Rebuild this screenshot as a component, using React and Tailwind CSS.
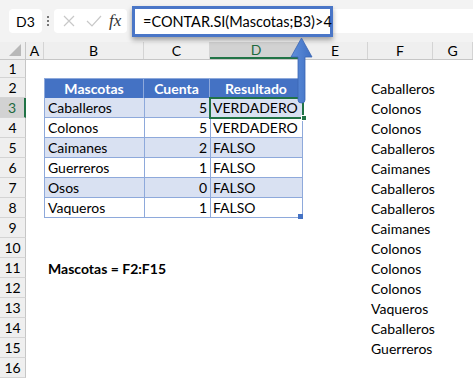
import React from 'react';

const cols = [
  { key: 'A', w: 18 },
  { key: 'B', w: 100 },
  { key: 'C', w: 66 },
  { key: 'D', w: 93 },
  { key: 'E', w: 65 },
  { key: 'F', w: 65 },
  { key: 'G', w: 40 },
];

const pets = [
  ['Caballeros', 5, 'VERDADERO'],
  ['Colonos', 5, 'VERDADERO'],
  ['Caimanes', 2, 'FALSO'],
  ['Guerreros', 1, 'FALSO'],
  ['Osos', 0, 'FALSO'],
  ['Vaqueros', 1, 'FALSO'],
];

const listF = [
  'Caballeros', 'Colonos', 'Colonos', 'Caballeros', 'Caimanes', 'Caballeros', 'Caballeros',
  'Caimanes', 'Colonos', 'Colonos', 'Colonos', 'Vaqueros', 'Caballeros', 'Guerreros',
];

const font = { fontFamily: 'Lato, "Open Sans", sans-serif' };

const RowHead = ({ n, active }) => (
  <div
    className={`w-[26px] shrink-0 flex items-center justify-center text-[14px] border-b border-[#d4d4d4] ${
      active ? 'bg-[#d2d2d2] text-[#1e6b3f] border-r-2 border-r-[#217346]' : 'bg-[#efefef] text-black border-r border-r-[#c6c6c6]'
    }`}
  >
    {n}
  </div>
);

const TableRow = ({ row, i }) => {
  const band = i % 2 === 0 ? 'bg-[#d9e1f2]' : 'bg-white';
  return (
    <div className="flex h-full">
      <div className={`w-[100px] ${band} border-l border-b border-[#8ea9db] pl-[3px] flex items-center`}>{row[0]}</div>
      <div className={`w-[66px] ${band} border-l border-b border-[#8ea9db] pr-[3px] flex items-center justify-end`}>{row[1]}</div>
      <div className={`w-[93px] ${band} border-l border-r border-b border-[#8ea9db] pl-[2px] flex items-center`}>{row[2]}</div>
    </div>
  );
};

export default function App() {
  const rows = [];
  for (let r = 1; r <= 16; r++) {
    const h = r === 1 ? 'h-[18px]' : 'h-[20px]';
    let content = null;
    if (r === 2) {
      content = (
        <div className="flex h-full bg-[#4472c4] text-white font-bold border border-b-0 border-[#8ea9db]">
          <div className="w-[99px] flex items-center justify-center border-r border-[#8ea9db]">Mascotas</div>
          <div className="w-[66px] flex items-center justify-center border-r border-[#8ea9db]">Cuenta</div>
          <div className="w-[92px] flex items-center justify-center">Resultado</div>
        </div>
      );
    } else if (r >= 3 && r <= 8) {
      content = <TableRow row={pets[r - 3]} i={r - 3} />;
    } else if (r === 11) {
      content = <div className="h-full flex items-center pl-[4px] font-bold">Mascotas = F2:F15</div>;
    }
    rows.push(
      <div key={r} className={`flex ${h}`}>
        <RowHead n={r} active={r === 3} />
        <div className="w-[18px] shrink-0" />
        <div className="w-[259px] shrink-0">{content}</div>
        <div className="w-[65px] shrink-0" />
        <div className="w-[65px] shrink-0 flex items-center pl-[3px]">
          {r >= 2 && r <= 15 ? listF[r - 2] : ''}
        </div>
      </div>
    );
  }

  return (
    <div className="relative w-[473px] h-[378px] overflow-hidden bg-white text-[14px] text-black" style={font}>
      {/* formula bar */}
      <div className="h-[42px] bg-[#f3f3f3] flex items-center">
        <div className="ml-[9px] w-[33px] h-[24px] bg-white rounded-[4px] flex items-center justify-center text-[14px]">D3</div>
        <div className="w-[12px] flex flex-col items-center gap-[2px]">
          <span className="w-[2px] h-[2px] bg-[#777]" />
          <span className="w-[2px] h-[2px] bg-[#777]" />
          <span className="w-[2px] h-[2px] bg-[#777]" />
        </div>
        <div className="w-[73px] h-[24px] bg-white rounded-[4px] flex items-center pl-[8px]">
          <svg width="14" height="14" viewBox="0 0 14 14" className="mr-[10px]">
            <path d="M2 2 L12 12 M12 2 L2 12" stroke="#c8c8c8" strokeWidth="1.2" />
          </svg>
          <svg width="16" height="14" viewBox="0 0 16 14" className="mr-[7px]">
            <path d="M1 7 L6 12 L15 2" stroke="#c8c8c8" strokeWidth="1.2" fill="none" />
          </svg>
          <span className="italic text-[17px] text-[#333]" style={{ fontFamily: '"Liberation Serif", serif' }}>fx</span>
        </div>
        <div className="ml-[5px] flex-1 h-[24px] bg-white" />
      </div>

      {/* column headers */}
      <div className="flex h-[18px] bg-[#efefef] border-b border-[#c6c6c6]">
        <div className="w-[26px] shrink-0 border-r border-[#c6c6c6] relative">
          <svg width="14" height="14" viewBox="0 0 14 14" className="absolute right-[3px] bottom-[2px]">
            <path d="M13 1 L13 13 L1 13 Z" fill="#b8b8b8" />
          </svg>
        </div>
        {cols.map((c) => (
          <div
            key={c.key}
            style={{ width: c.w }}
            className={`shrink-0 flex items-center justify-center text-[14px] border-r border-[#d4d4d4] ${
              c.key === 'D' ? 'bg-[#d2d2d2] text-[#1e6b3f] border-b-2 border-b-[#217346]' : ''
            }`}
          >
            {c.key}
          </div>
        ))}
      </div>

      {rows}

      {/* highlighted formula */}
      <div className="absolute left-[132px] top-[6px] w-[201px] h-[31px] border-[3px] border-[#4a76c7] bg-white shadow-[0_3px_5px_rgba(0,0,0,0.35)] flex items-center pl-[8px] text-[14.5px]">
        =CONTAR.SI(Mascotas;B3)&gt;4
      </div>

      {/* selected cell D3 */}
      <div className="absolute left-[209px] top-[97px] w-[95px] h-[22px] border-2 border-[#217346]" />
      <div className="absolute left-[301px] top-[115px] w-[6px] h-[6px] bg-[#217346] border border-white" />
      <div className="absolute left-[298px] top-[214px] w-[5px] h-[5px] bg-[#4472c4]" />

      {/* arrow */}
      <svg className="absolute left-[290px] top-[37px]" width="24" height="68" viewBox="0 0 24 68">
        <defs>
          <linearGradient id="ag" x1="0" x2="1" y1="0" y2="0">
            <stop offset="0" stopColor="#5f8fdc" />
            <stop offset="1" stopColor="#3f6fc2" />
          </linearGradient>
        </defs>
        <path
          d="M11.5 1 L22 20 L15 20 L15 63 Q15 66 11.5 66 Q8 66 8 63 L8 20 L1 20 Z"
          fill="url(#ag)"
          stroke="#3b66b3"
          strokeWidth="0.8"
        />
      </svg>
    </div>
  );
}
